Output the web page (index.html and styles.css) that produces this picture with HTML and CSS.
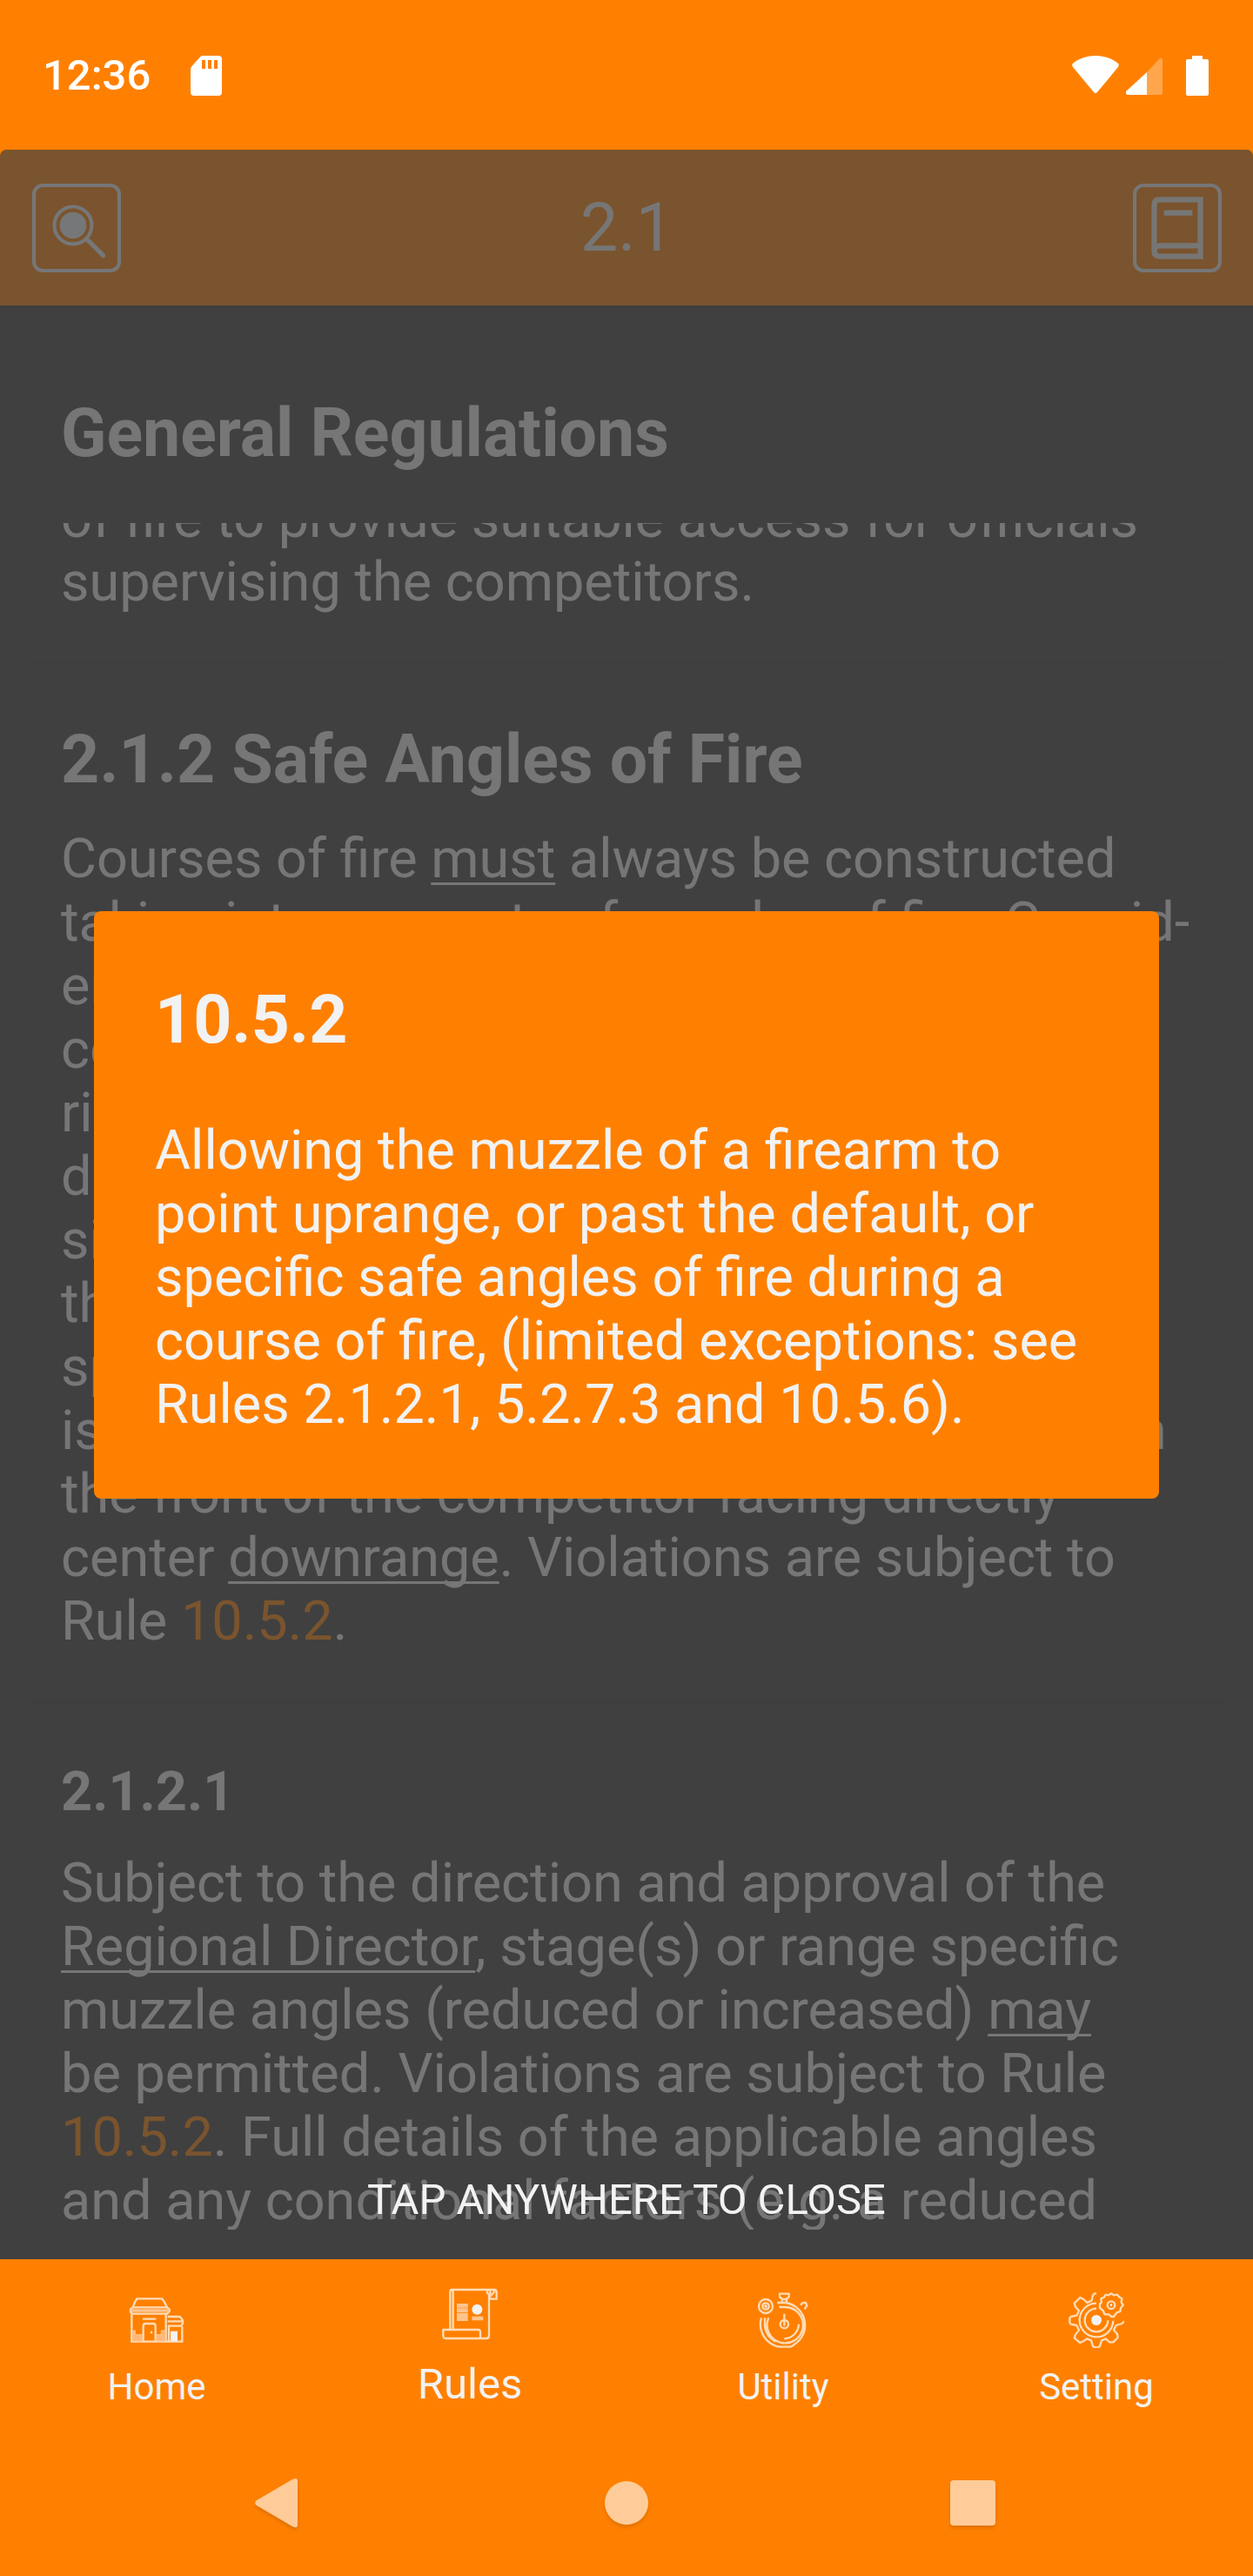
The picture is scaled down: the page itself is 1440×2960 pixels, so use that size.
FILE: index.html
```html
<!DOCTYPE html>
<html lang="en">
<head>
<meta charset="utf-8">
<meta name="viewport" content="width=device-width, initial-scale=1">
<title>2.1 General Regulations</title>
<link rel="stylesheet" href="styles.css">
</head>
<body>
<div class="app">
  <div class="status">
    <div class="status-group status-left">
      <span class="clock">12:36</span>
      <svg class="sd" viewBox="0 0 36 46" aria-hidden="true"><path fill="#fff" fill-rule="evenodd" d="M13.500 0H32q4 0 4 4V42q0 4-4 4H4q-4 0-4-4V15.500q0-2 1.500-3.500L11 1.500Q12 0 13.500 0ZM13 5v10h4V5ZM20 5v10h4V5ZM27 5v10h4V5Z"/></svg>
    </div>
    <div class="status-group status-right">
      <svg class="wifi" viewBox="0 0 54 46" aria-hidden="true"><path fill="#fff" d="M1 13Q-1 10 2 8Q13 0 27 0T52 8Q55 10 53 13L29 42Q27 44 25 42Z"/></svg>
      <svg class="signal" viewBox="0 0 42 46" aria-hidden="true"><path fill="#fff" fill-opacity=".3" d="M24 19L38 4q4-3 4 1V43q0 2-2 2H24Z"/><path fill="#fff" d="M24 19V45H2q-3-1-2-4Z"/></svg>
      <svg class="battery" viewBox="0 0 26 46" aria-hidden="true"><path fill="#fff" d="M7 0H19V4H24q2 0 2 2V44q0 2-2 2H2q-2 0-2-2V6q0-2 2-2H7Z"/></svg>
    </div>
  </div>

  <main class="screen">
    <header class="bar">
      <button class="bar-button" aria-label="Search">
        <svg viewBox="0 0 100 100" fill="none" stroke="#f2f6fa" stroke-linecap="round"><rect x="2" y="2" width="96" height="96" rx="10" stroke-width="4"/><circle cx="46" cy="47" r="21" stroke-width="4"/><circle cx="46" cy="47" r="15" fill="#f2f6fa" stroke="none"/><path stroke-width="5" d="M62 63L80 81"/></svg>
      </button>
      <p class="bar-title">2.1</p>
      <button class="bar-button" aria-label="Rule book">
        <svg viewBox="0 0 100 100" fill="none" stroke="#f2f2f2"><rect x="2" y="2" width="96" height="96" rx="10" stroke-width="4"/><path stroke-width="6" d="M76 18V82H30Q24 82 24 76V24Q24 18 30 18H79M24 76Q24 70 30 70H76M24 82M76 82H79M35 33H67"/></svg>
      </button>
    </header>

    <h1 class="chapter">General Regulations</h1>

    <div class="scroller">
      <article class="rules">
        <p class="rule-text">of fire to provide suitable access for officials supervising the competitors.</p>
        <hr class="divider">
        <h2 class="rule-title">2.1.2 Safe Angles of Fire</h2>
        <p class="rule-text">Courses of fire <u>must</u> always be constructed taking into account safe angles of fire. Consid&shy;eration must be given to safe target frame construction and the angle of any possible ricochets. Where appropriate, the physical dimensions and suitability of backstops and<br>side berms must be determined as part of<br>the construction process. Unless otherwise specified, the default maximum muzzle angle<br>is 90 degrees in all directions, measured from<br>the front of the competitor facing directly<br>center <u>downrange</u>. Violations are subject to<br>Rule <a class="ref" href="#rule">10.5.2</a>.</p>
        <hr class="divider">
        <h3 class="rule-subtitle">2.1.2.1</h3>
        <p class="rule-text">Subject to the direction and approval of the <u>Regional Director</u>, stage(s) or range specific muzzle angles (reduced or increased) <u>may</u><br>be permitted. Violations are subject to Rule <a class="ref" href="#rule">10.5.2</a>. Full details of the applicable angles<br>and any conditional factors (e.g. a reduced</p>
      </article>
    </div>

    <div class="overlay">
      <section class="popup" id="rule" role="dialog" aria-labelledby="rule-name">
        <h2 class="popup-title" id="rule-name">10.5.2</h2>
        <p class="popup-text">Allowing the muzzle of a firearm to point uprange, or past the default, or specific safe angles of fire during a course of fire, (limited exceptions: see Rules 2.1.2.1, 5.2.7.3 and 10.5.6).</p>
      </section>
      <p class="hint">TAP ANYWHERE TO CLOSE</p>
    </div>
  </main>

  <nav class="tabs">
    <a class="tab" href="#home">
      <svg class="tab-icon" viewBox="0 0 192 192" fill="none" stroke="#ffdcb8" stroke-width="7" stroke-linejoin="round"><path d="M28 22H114L122 32L132 52H14L22 32ZM14 52L6 58V68L12 74H132L140 66V58L132 52M10 76V170H184V118M128 76V170M134 84H176L186 96V108L180 116H134M134 100H186M48 92H94M50 170V116Q50 108 58 108H84Q92 108 92 116V170M78 134V142M138 118V170"/><path stroke="#ffc48e" stroke-width="10" d="M8 63H138"/><path fill="#ffb87a" stroke="#ffc48e" stroke-width="3" d="M14 132H22V146H46V168H14ZM96 146H112V132H126V168H96Z"/><path fill="#f2f2f2" stroke="none" d="M144 134H168V168H144Z"/></svg>
      <span class="tab-label">Home</span>
    </a>
    <a class="tab tab-active" href="#rules" aria-current="page">
      <svg class="tab-icon" viewBox="0 0 192 192" fill="none" stroke="#ffdcb8" stroke-width="7" stroke-linejoin="round"><path d="M28 148V20Q28 12 36 12H180Q188 12 188 20V44H160M160 12Q154 16 156 24L162 28V170Q162 180 152 180H14Q4 180 4 172V150H124Q132 150 132 158V180M38 148V14M166 14V40M170 32L182 16"/><path stroke="#ffc48e" stroke-width="14" d="M51 67H89M51 83H89M51 99H89M51 113H89M103 111H142"/><circle cx="121" cy="80" r="18" fill="#f2f2f2" stroke="none"/></svg>
      <span class="tab-label">Rules</span>
    </a>
    <a class="tab" href="#utility">
      <svg class="tab-icon" viewBox="0 0 192 192" fill="none" stroke="#ffdcb8" stroke-width="7" stroke-linejoin="round"><circle cx="36" cy="48" r="24"/><circle cx="36" cy="48" r="11"/><circle cx="36" cy="48" r="5" fill="#f2f2f2" stroke="none"/><path d="M84 5H116V16L106 24H94L84 16ZM92 24V34M108 24V34M76 36H104A78 78 0 0 1 134 180Q128 188 116 188H84Q72 188 60 180A78 78 0 0 1 21 88M82 51H102A62 62 0 1 1 46 88M33 88V112A66 66 0 0 0 70 170M156 44L164 36H174L178 46L170 58M100 74V96M150 110A52 52 0 0 1 100 160"/><circle cx="100" cy="110" r="14"/><path d="M100 98V116"/></svg>
      <span class="tab-label">Utility</span>
    </a>
    <a class="tab" href="#setting">
      <svg class="tab-icon" viewBox="0 0 192 192" fill="none" stroke="#ffdcb8" stroke-width="7" stroke-linejoin="round"><path d="M96 4H90L84 10L80 28L64 36L52 24L40 18L20 38L24 50L36 64L28 80L8 84L4 90V104L8 110L28 114L36 130L24 146L20 158L40 174L52 168L64 160L78 166L84 186L90 190H102L108 186L114 166L128 160L142 172L154 172L170 156L168 144L156 130L164 114L184 108L190 102V98"/><path d="M96 38A58 58 0 1 0 154 98M96 56A40 40 0 1 0 136 96"/><path d="M138 10L146 4L156 10L168 8L174 16L184 22L182 34L188 44L180 54L178 66L166 70L156 84L148 84L138 76L124 76L120 64L108 54L108 40L114 34L112 22L124 16L128 8Z"/><circle cx="147" cy="44" r="13"/><circle cx="147" cy="44" r="4" fill="#f2f2f2" stroke="none"/><circle cx="96" cy="96" r="18" fill="#f2f2f2" stroke="none"/></svg>
      <span class="tab-label">Setting</span>
    </a>
  </nav>

  <div class="system">
    <button class="system-button" aria-label="Back"><svg class="system-icon" viewBox="0 0 64 64"><path fill="#fc9" d="M46 5Q52 2 52 7V57Q52 62 46 59L5 35Q1 32 5 29Z"/></svg></button>
    <button class="system-button" aria-label="Home screen"><svg class="system-icon" viewBox="0 0 64 64"><circle cx="32" cy="32" r="25" fill="#fc9"/></svg></button>
    <button class="system-button" aria-label="Recent apps"><svg class="system-icon" viewBox="0 0 64 64"><rect x="6" y="6" width="52" height="52" rx="4" fill="#fc9"/></svg></button>
  </div>
</div>
</body>
</html>
```
FILE: styles.css
```css
* {
  box-sizing: border-box;
}

body {
  margin: 0;
  background: #ff8000;
  color: #f2f2f2;
  font-family: Roboto, "Liberation Sans", sans-serif;
  font-size: 63px;
  line-height: 73px;
}

h1, h2, h3, p {
  margin: 0;
}

button {
  padding: 0;
  border: 0;
  background: none;
  color: inherit;
  font: inherit;
}

svg {
  display: block;
}

.app {
  display: flex;
  flex-direction: column;
  min-height: 100vh;
}

/* Device status bar */
.status {
  display: flex;
  justify-content: space-between;
  padding: 58px 51px 57px 49px;
  color: #fff;
}

.status-group {
  display: flex;
  align-items: center;
}

.clock {
  font-size: 49px;
  font-weight: 500;
  line-height: 57px;
}

.status-left {
  gap: 46px;
}

.sd {
  width: 36px;
  height: 46px;
}

.wifi {
  width: 54px;
  height: 46px;
}

.signal {
  width: 42px;
  height: 46px;
  margin-left: 8px;
}

.battery {
  width: 26px;
  height: 46px;
  margin-left: 27px;
}

/* Rule screen */
.screen {
  position: relative;
  display: flex;
  flex: 1;
  flex-direction: column;
  overflow: hidden;
  border-radius: 8px 8px 0 0;
  background: #3c3c3c;
}

.bar {
  display: flex;
  align-items: center;
  justify-content: space-between;
  padding: 39px 36px 38px 37px;
  background: #ff8000;
}

.bar-button {
  width: 102px;
  height: 102px;
}

.bar-title {
  font-size: 77px;
  line-height: 90px;
}

.chapter {
  padding: 102px 70px 58px;
  font-size: 77px;
  line-height: 90px;
}

.scroller {
  flex: 1;
  margin-bottom: 34px;
  overflow: hidden;
}

/* Scrolled part of the way through a line at both ends */
.rules {
  margin-top: -42px;
  margin-bottom: -4px;
}

.rule-text,
.rule-title,
.rule-subtitle {
  padding: 0 70px;
}

.rule-title {
  margin-bottom: 32px;
  font-size: 77px;
  line-height: 90px;
}

.rule-subtitle {
  margin-bottom: 32px;
  font-size: 63px;
}

.divider {
  height: 4px;
  margin: 55px 35px 64px;
  border: 0;
  background: #363636;
}

u {
  text-decoration-thickness: 3px;
  text-decoration-skip-ink: none;
  text-underline-offset: 6px;
}

.ref {
  color: #ff8000;
  text-decoration: none;
}

/* Rule popup */
.overlay {
  position: absolute;
  inset: 0;
  display: flex;
  flex-direction: column;
  justify-content: center;
  padding: 0 108px;
  background: rgba(66, 66, 66, 0.7);
}

.popup {
  padding: 80px 70px 72px;
  border-radius: 8px;
  background: #ff8000;
}

.popup-title {
  margin-bottom: 68px;
  font-size: 77px;
  line-height: 90px;
}

.hint {
  position: absolute;
  right: 0;
  bottom: 40px;
  left: 0;
  font-size: 49px;
  line-height: 57px;
  text-align: center;
}

/* Tab bar */
.tabs {
  display: grid;
  grid-template-columns: repeat(4, 1fr);
}

.tab {
  display: flex;
  flex-direction: column;
  align-items: center;
  justify-content: flex-end;
  height: 196px;
  padding-bottom: 24px;
  color: inherit;
  text-decoration: none;
}

.tab-icon {
  width: 64px;
  height: 64px;
  margin-bottom: 20px;
}

.tab-label {
  font-size: 42px;
  line-height: 50px;
}

.tab-active .tab-label {
  font-size: 49px;
  line-height: 57px;
}

/* Device navigation bar */
.system {
  display: grid;
  grid-template-columns: repeat(3, 1fr);
  padding: 52px 123px;
}

.system-button {
  display: flex;
  justify-content: center;
}

.system-icon {
  width: 64px;
  height: 64px;
  filter: drop-shadow(0 3px 2px rgba(0, 0, 0, 0.12));
}
```
